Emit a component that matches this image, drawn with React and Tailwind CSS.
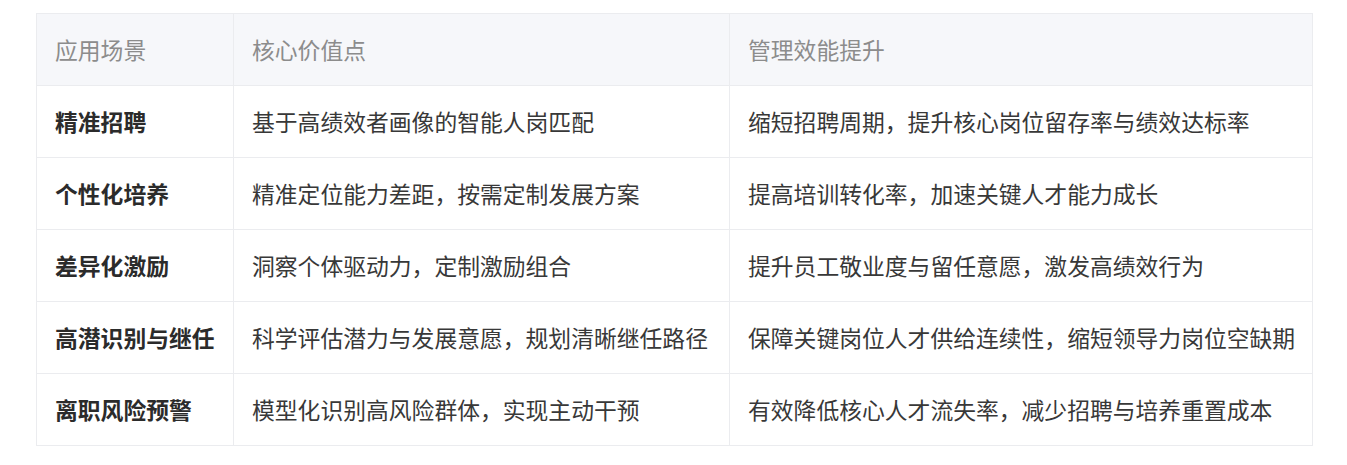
import React from "react";

const rows = [
  ["精准招聘", "基于高绩效者画像的智能人岗匹配", "缩短招聘周期，提升核心岗位留存率与绩效达标率"],
  ["个性化培养", "精准定位能力差距，按需定制发展方案", "提高培训转化率，加速关键人才能力成长"],
  ["差异化激励", "洞察个体驱动力，定制激励组合", "提升员工敬业度与留任意愿，激发高绩效行为"],
  ["高潜识别与继任", "科学评估潜力与发展意愿，规划清晰继任路径", "保障关键岗位人才供给连续性，缩短领导力岗位空缺期"],
  ["离职风险预警", "模型化识别高风险群体，实现主动干预", "有效降低核心人才流失率，减少招聘与培养重置成本"],
];

export default function App() {
  return (
    <div
      className="w-[1347px] h-[465px] bg-white pt-[13px] pl-[36px] pr-[35px]"
      style={{ fontFamily: '"Noto Sans CJK SC", "Noto Sans", sans-serif' }}
    >
      <table className="w-[1276px] border-collapse table-fixed text-[22.8px] leading-[33px]">
        <colgroup>
          <col className="w-[197px]" />
          <col className="w-[496px]" />
          <col className="w-[583px]" />
        </colgroup>
        <thead>
          <tr className="h-[72px] bg-[#f6f7fa]">
            {["应用场景", "核心价值点", "管理效能提升"].map((h) => (
              <th
                key={h}
                className="border border-[#ebecef] px-[18px] text-left font-normal text-[#8c8c8c] align-middle"
              >
                {h}
              </th>
            ))}
          </tr>
        </thead>
        <tbody>
          {rows.map((r) => (
            <tr key={r[0]} className="h-[72px]">
              <td className="border border-[#ebecef] px-[18px] font-bold text-[#2b2b2b] align-middle whitespace-nowrap">
                {r[0]}
              </td>
              <td className="border border-[#ebecef] px-[18px] text-[#383838] align-middle whitespace-nowrap">
                {r[1]}
              </td>
              <td className="border border-[#ebecef] px-[18px] text-[#383838] align-middle whitespace-nowrap">
                {r[2]}
              </td>
            </tr>
          ))}
        </tbody>
      </table>
    </div>
  );
}
